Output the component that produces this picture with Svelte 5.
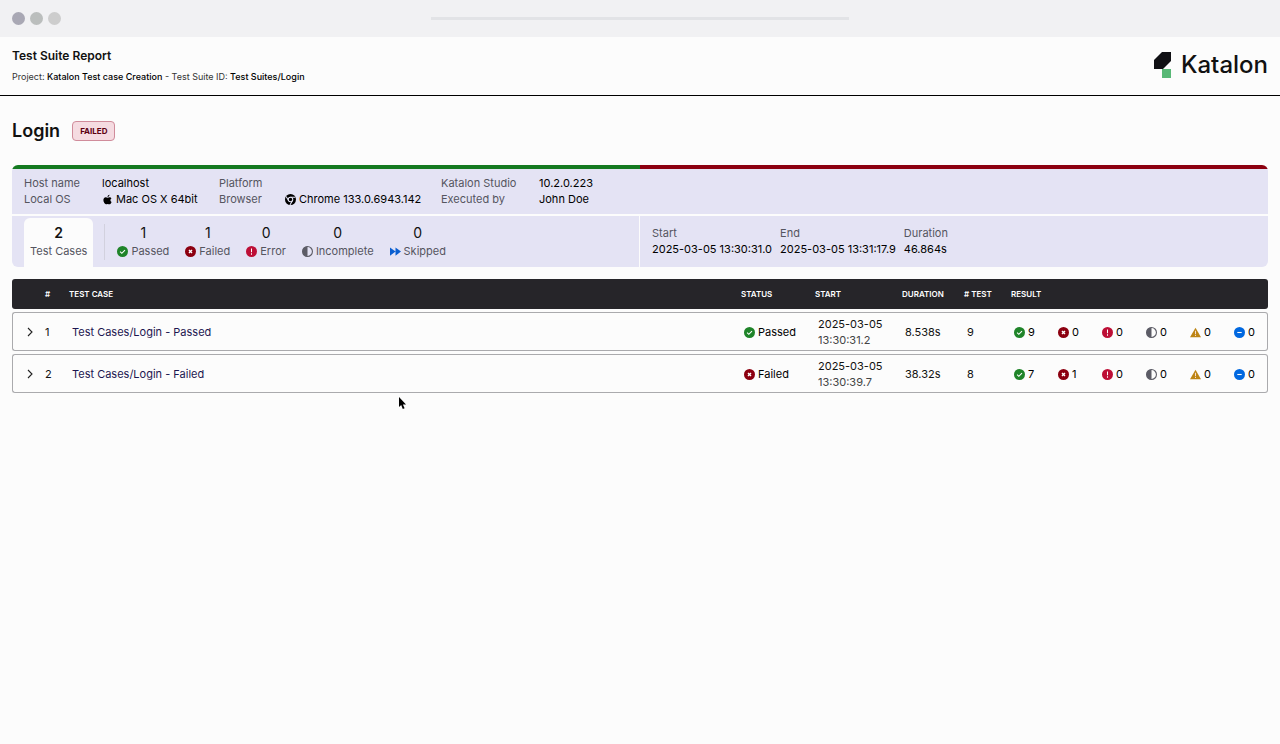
<script lang="ts">
	const info = [
		{ label: 'Host name', value: 'localhost' },
		{ label: 'Platform', value: '' },
		{ label: 'Katalon Studio', value: '10.2.0.223' },
		{ label: 'Local OS', value: 'Mac OS X 64bit', icon: 'apple' },
		{ label: 'Browser', value: 'Chrome 133.0.6943.142', icon: 'chrome' },
		{ label: 'Executed by', value: 'John Doe' }
	]

	const stats = [
		{ label: 'Passed', count: 1, icon: 'passed' },
		{ label: 'Failed', count: 1, icon: 'failed' },
		{ label: 'Error', count: 0, icon: 'error' },
		{ label: 'Incomplete', count: 0, icon: 'incomplete' },
		{ label: 'Skipped', count: 0, icon: 'skipped' }
	]

	const times = [
		{ label: 'Start', value: '2025-03-05 13:30:31.0' },
		{ label: 'End', value: '2025-03-05 13:31:17.9' },
		{ label: 'Duration', value: '46.864s' }
	]

	const resultIcons = ['passed', 'failed', 'error', 'incomplete', 'warning', 'info']

	const cases = [
		{
			name: 'Test Cases/Login - Passed',
			status: 'Passed',
			date: '2025-03-05',
			time: '13:30:31.2',
			duration: '8.538s',
			tests: 9,
			results: [9, 0, 0, 0, 0, 0]
		},
		{
			name: 'Test Cases/Login - Failed',
			status: 'Failed',
			date: '2025-03-05',
			time: '13:30:39.7',
			duration: '38.32s',
			tests: 8,
			results: [7, 1, 0, 0, 0, 0]
		}
	]

	const passed = 1
	const failed = 1

	let selected = 'all'
</script>

{#snippet icon(name)}
	<svg class="icon" viewBox="0 0 16 16" aria-hidden="true">
		{#if name === 'passed'}
			<circle cx="8" cy="8" r="8" fill="#1f8429" />
			<path d="M4.5 8.2l2.5 2.4 4.6-4.6" fill="none" stroke="#fff" stroke-width="1.6" />
		{:else if name === 'failed'}
			<circle cx="8" cy="8" r="8" fill="#8c0010" />
			<path d="M5.8 5.8l4.4 4.4M10.2 5.8l-4.4 4.4" stroke="#fff" stroke-width="2" />
		{:else if name === 'error'}
			<circle cx="8" cy="8" r="8" fill="#bd0f36" />
			<path d="M8 3.5v5.6M8 10.6v2" stroke="#fff" stroke-width="1.5" />
		{:else if name === 'incomplete'}
			<circle cx="8" cy="8" r="7.2" fill="none" stroke="#5c5c66" stroke-width="1.6" />
			<path d="M8 .8a7.2 7.2 0 0 0 0 14.4z" fill="#5c5c66" />
		{:else if name === 'warning'}
			<path d="M8 1l8 14H0z" fill="#bd8514" />
			<path d="M8 5.5v4.6M8 11.4v1.8" stroke="#f6dcd0" stroke-width="1.5" />
		{:else if name === 'info'}
			<circle cx="8" cy="8" r="8" fill="#0068e0" />
			<path d="M4.8 8h6.4" stroke="#fff" stroke-width="1.6" />
		{:else if name === 'skipped'}
			<path d="M0 2l8 6-8 6zM8 2l8 6-8 6z" fill="#0b5fd0" />
		{:else if name === 'apple'}
			<path
				d="M10.900 1c.1 1.700-1.300 3.200-2.900 3.200C7.800 2.600 9.300 1.100 10.900 1zM13.900 11.500c-.7 1.800-1.800 3.500-3.200 3.500-1 0-1.400-.6-2.500-.6s-1.600.6-2.500.6C3.900 15 2 11.600 2 8.900c0-2.600 1.600-4.200 3.400-4.200 1.100 0 1.900.7 2.700.7.8 0 1.800-.8 3.200-.7 1 0 1.900.5 2.500 1.300-2.300 1.400-1.900 4.500.1 5.500z"
				fill="#000"
			/>
		{:else if name === 'chrome'}
			<circle cx="8" cy="8" r="8" fill="#000" />
			<circle cx="8" cy="8" r="3.300" fill="none" stroke="#e4e3f4" stroke-width="1.500" />
			<path
				d="M8 4.700h7.200M5.100 9.600L1.600 3.600M10.900 9.600L7.300 15.800"
				stroke="#e4e3f4"
				stroke-width="1.500"
			/>
		{/if}
	</svg>
{/snippet}

<div class="page">
	<div class="window-bar">
		<span class="dot close"></span>
		<span class="dot minimize"></span>
		<span class="dot expand"></span>
		<span class="address"></span>
	</div>

	<header>
		<div>
			<h1>Test Suite Report</h1>
			<p class="project">
				Project: <b>Katalon Test case Creation</b> - Test Suite ID: <b>Test Suites/Login</b>
			</p>
		</div>
		<div class="logo">
			<svg viewBox="0 0 17 26" aria-hidden="true">
				<path d="M8 0h9v9l-8 8H0V8z" fill="#101014" />
				<path d="M8 17h9v9H8z" fill="#58b876" />
			</svg>
			<span>Katalon</span>
		</div>
	</header>

	<main>
		<div class="title">
			<h2>Login</h2>
			<span class="badge">FAILED</span>
		</div>

		<section class="summary">
			<div class="ratio">
				<span class="ratio-passed" style="flex-grow: {passed}"></span>
				<span class="ratio-failed" style="flex-grow: {failed}"></span>
			</div>
			<div class="info">
				{#each info as item}
					<span class="label">{item.label}</span>
					<span class="value">
						{#if item.icon}{@render icon(item.icon)}{/if}
						{item.value}
					</span>
				{/each}
			</div>
			<div class="totals">
				<div class="stats">
					<button
						class="stat"
						class:active={selected === 'all'}
						on:click={() => (selected = 'all')}
						type="button"
					>
						<span class="count">2</span>
						<span class="label">Test Cases</span>
					</button>
					<span class="divider"></span>
					{#each stats as stat}
						<button
							class="stat"
							class:active={selected === stat.label}
							on:click={() => (selected = stat.label)}
							type="button"
						>
							<span class="count">{stat.count}</span>
							<span class="label">{@render icon(stat.icon)}{stat.label}</span>
						</button>
					{/each}
				</div>
				<div class="times">
					{#each times as time}
						<div>
							<span class="label">{time.label}</span>
							<span class="value">{time.value}</span>
						</div>
					{/each}
				</div>
			</div>
		</section>

		<table>
			<colgroup>
				<col class="col-toggle" />
				<col class="col-index" />
				<col />
				<col class="col-status" />
				<col class="col-start" />
				<col class="col-duration" />
				<col class="col-tests" />
				<col class="col-result" />
			</colgroup>
			<thead>
				<tr>
					<th></th>
					<th>#</th>
					<th>TEST CASE</th>
					<th>STATUS</th>
					<th>START</th>
					<th>DURATION</th>
					<th># TEST</th>
					<th>RESULT</th>
				</tr>
			</thead>
			<tbody>
				{#each cases as row, i}
					<tr>
						<td class="toggle">
							<button type="button" aria-label="Expand {row.name}">
								<svg viewBox="0 0 6 10" aria-hidden="true">
									<path d="M1 1l4 4-4 4" fill="none" stroke="#222" stroke-width="1.1" />
								</svg>
							</button>
						</td>
						<td class="index">{i + 1}</td>
						<td><a href="#case-{i + 1}">{row.name}</a></td>
						<td>
							<span class="value">{@render icon(row.status.toLowerCase())}{row.status}</span>
						</td>
						<td>
							<div>{row.date}</div>
							<div class="time">{row.time}</div>
						</td>
						<td>{row.duration}</td>
						<td>{row.tests}</td>
						<td>
							<div class="results">
								{#each row.results as count, n}
									<span class="value">{@render icon(resultIcons[n])}{count}</span>
								{/each}
							</div>
						</td>
					</tr>
				{/each}
			</tbody>
		</table>
	</main>

	<svg class="cursor" viewBox="0 0 8 13" aria-hidden="true">
		<path d="M0 0v10l2.200-2 1.600 4 1.800-.8-1.700-3.700H7z" fill="#000" />
	</svg>
</div>

<style>
	:global(body) {
		background: #fcfcfc;
	}

	.page {
		position: relative;
		min-height: 100vh;
		font-family: Inter, 'Liberation Sans', sans-serif;
		font-size: 11px;
		line-height: 16px;
		color: #111;
	}

	h1,
	h2,
	p {
		margin: 0;
	}

	button {
		padding: 0;
		font: inherit;
		color: inherit;
		background: none;
		border: 0;
		cursor: pointer;
	}

	.window-bar {
		height: 37px;
		padding: 0 66px 0 12px;
		display: grid;
		grid-template-columns: 13px 13px 13px 1fr;
		gap: 5px;
		align-items: center;
		background: #f1f1f3;
	}

	.dot {
		height: 13px;
		border-radius: 50%;
	}

	.close {
		background: #a9a8b4;
	}

	.minimize {
		background: #bbbebd;
	}

	.expand {
		background: #cdcdcd;
	}

	.address {
		width: 418px;
		height: 3px;
		justify-self: center;
		background: #e2e3e6;
	}

	header {
		padding: 10px 12px;
		display: flex;
		justify-content: space-between;
		border-bottom: 1px solid #000;
	}

	h1 {
		font-size: 12px;
		font-weight: 600;
		line-height: 18px;
	}

	.project {
		margin-top: 4px;
		font-size: 9px;
		color: #333;
	}

	.project b {
		font-weight: 500;
		color: #000;
	}

	.logo {
		padding-top: 5px;
		display: flex;
		gap: 10px;
		font-size: 24px;
		font-weight: 500;
		line-height: 26px;
	}

	.logo svg {
		width: 17px;
		height: 26px;
	}

	main {
		padding: 24px 12px;
	}

	.title {
		display: flex;
		align-items: center;
		gap: 12px;
	}

	h2 {
		font-size: 18px;
		font-weight: 600;
		line-height: 22px;
	}

	.badge {
		padding: 0 7px;
		font-size: 8px;
		font-weight: 700;
		line-height: 18px;
		color: #5c0011;
		background: #f5dbe1;
		border: 1px solid #d08c9b;
		border-radius: 4px;
	}

	.summary {
		margin-top: 23px;
		overflow: hidden;
		border-radius: 6px;
	}

	.ratio {
		height: 4px;
		display: flex;
	}

	.ratio-passed {
		background: #147a20;
	}

	.ratio-failed {
		background: #8c0010;
	}

	.info {
		padding: 6px 12px 7px;
		display: grid;
		grid-template-columns: 78px 117px 66px 156px 98px auto;
		background: #e4e3f4;
	}

	.label {
		color: #55555f;
	}

	.value {
		color: #000;
	}

	.label,
	.value {
		display: flex;
		align-items: center;
		gap: 3px;
		white-space: nowrap;
	}

	.icon {
		width: 11px;
		height: 11px;
		flex: none;
	}

	.totals {
		margin-top: 2px;
		display: grid;
		grid-template-columns: 1fr 1fr;
	}

	.stats {
		padding: 2px 12px 0;
		display: flex;
		gap: 4px;
		background: #e4e3f4;
		border-right: 1px solid #fcfcfc;
	}

	.stat {
		padding: 5px 6px 8px;
	}

	.stat.active {
		background: #fcfcfc;
		border-radius: 6px 6px 0 0;
	}

	.count {
		height: 20px;
		display: block;
		font-size: 14px;
		line-height: 20px;
	}

	.active .count {
		font-weight: 600;
	}

	.divider {
		width: 1px;
		margin: 6px 2px 7px 7px;
		background: #d2d1de;
	}

	.stat .label {
		justify-content: center;
	}

	.times {
		padding: 9px 12px;
		display: flex;
		gap: 8px;
		background: #e4e3f4;
	}

	table {
		width: 100%;
		margin-top: 9px;
		table-layout: fixed;
		border-spacing: 0 3px;
	}

	.col-toggle {
		width: 30px;
	}

	.col-index {
		width: 24px;
	}

	.col-status {
		width: 74px;
	}

	.col-start {
		width: 87px;
	}

	.col-duration {
		width: 62px;
	}

	.col-tests {
		width: 47px;
	}

	.col-result {
		width: 260px;
	}

	th {
		height: 30px;
		padding: 0 3px;
		font-size: 8px;
		font-weight: 600;
		text-align: left;
		white-space: nowrap;
		color: #fff;
		background: #262529;
	}

	td {
		padding: 3px 6px 2px;
		border: 1px solid #aaaaad;
		border-width: 1px 0;
	}

	th:first-child,
	td:first-child {
		border-radius: 3px 0 0 3px;
	}

	th:last-child,
	td:last-child {
		border-radius: 0 3px 3px 0;
	}

	td:first-child {
		border-left-width: 1px;
	}

	td:last-child {
		border-right-width: 1px;
	}

	td.index {
		padding: 0 3px;
	}

	.toggle button {
		width: 22px;
		height: 16px;
		display: grid;
		place-content: center;
	}

	.toggle svg {
		width: 6px;
		height: 10px;
	}

	a {
		color: #1c1650;
		text-decoration: none;
	}

	.time {
		color: #444;
	}

	.results {
		display: grid;
		grid-template-columns: repeat(6, 44px);
	}

	.cursor {
		position: absolute;
		top: 397px;
		left: 399px;
		width: 8px;
		height: 13px;
	}
</style>
